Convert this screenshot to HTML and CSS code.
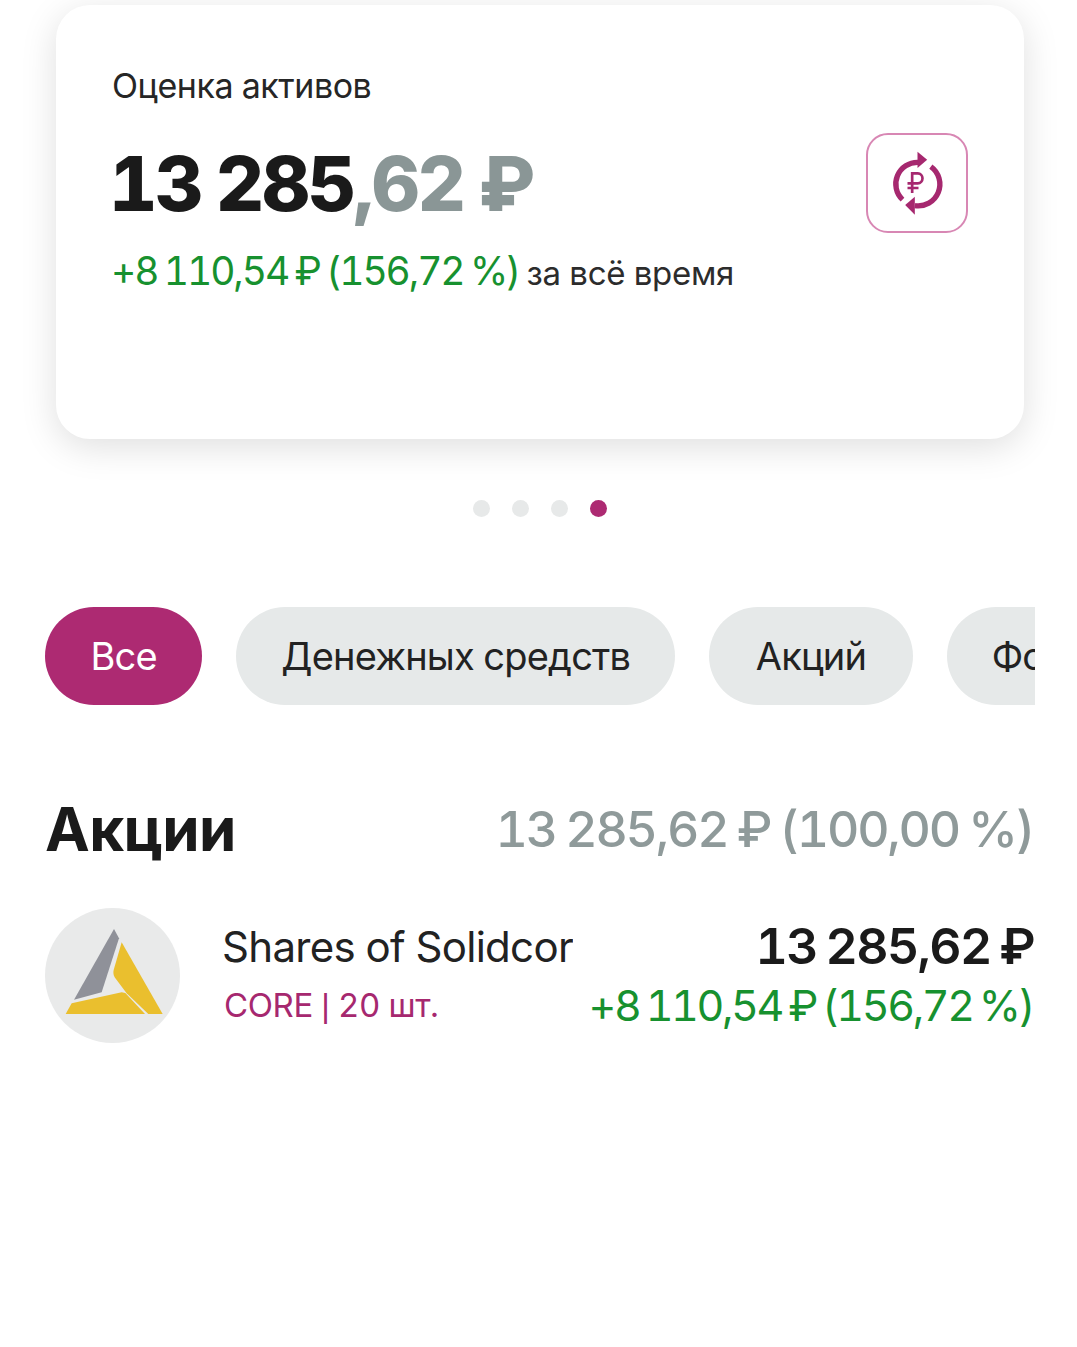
FILE: index.html
```html
<!DOCTYPE html>
<html lang="ru">
<head>
<meta charset="utf-8">
<title>Оценка активов</title>
<link rel="stylesheet" href="styles.css">
</head>
<body>
<main class="page">
  <section class="card">
    <div class="card-text">
      <p class="card-label">Оценка активов</p>
      <p class="total"><span>13 285</span><span class="total-muted">,62 ₽</span></p>
      <p class="change"><span class="change-value">+8 110,54 ₽ (156,72 %)</span> <span class="change-note">за всё время</span></p>
    </div>
    <button class="swap" type="button" aria-label="Обмен">
      <svg viewBox="120 87 170 210" width="57" height="70" fill="none">
        <path d="M160 242 A65 65 0 0 1 207 130" stroke="#a6286f" stroke-width="16"/>
        <path d="M205 98 L234 122 L205 147 Z" fill="#a6286f"/>
        <path d="M245 143 A65 65 0 0 1 197 260" stroke="#a6286f" stroke-width="16"/>
        <path d="M197 233 L168 258 L197 287 Z" fill="#a6286f"/>
        <path d="M189 222 V163 H206 A14 15 0 0 1 206 193 H175 M175 207 H208" stroke="#a6286f" stroke-width="8"/>
      </svg>
    </button>
  </section>

  <div class="dots">
    <i class="dot"></i><i class="dot"></i><i class="dot"></i><i class="dot dot-active"></i>
  </div>

  <nav class="chips">
    <a class="chip chip-active">Все</a>
    <a class="chip">Денежных средств</a>
    <a class="chip chip-short">Акций</a>
    <a class="chip">Фондов</a>
  </nav>

  <section class="group">
    <header class="group-head">
      <h2 class="group-title">Акции</h2>
      <span class="group-sum">13 285,62 ₽ (100,00 %)</span>
    </header>
    <div class="asset">
      <div class="logo">
        <svg viewBox="45 39 405 405" width="135" height="135">
          <path d="M252 102 L267 130 L215 292 L132 314 Z" fill="#8f9199"/>
          <path d="M275 142 L398 357 L355 357 L290 295 L255 248 Q248 238 251 225 Z" fill="#eabf2e"/>
          <path d="M107 357 L125 325 L275 292 L286 294 L345 357 Z" fill="#eabf2e"/>
        </svg>
      </div>
      <div class="asset-name">
        <div class="asset-title">Shares of Solidcore</div>
        <div class="asset-ticker">CORE <span class="ticker-sep">|</span> 20 шт.</div>
      </div>
      <div class="asset-values">
        <div class="asset-sum">13 285,62 ₽</div>
        <div class="asset-change">+8 110,54 ₽ (156,72 %)</div>
      </div>
    </div>
  </section>
</main>
</body>
</html>
```

FILE: styles.css
```css
* { box-sizing: border-box; }
html, body { margin: 0; background: #fff; }
body {
  width: 1077px;
  height: 1347px;
  overflow: hidden;
  font-family: Inter, "Noto Sans", sans-serif;
  font-variant-numeric: tabular-nums;
  color: #1c1c1c;
}
p, h2 { margin: 0; }
.page { padding: 5px 42px 0 45px; }

.card {
  margin: 0 11px;
  width: 968px;
  height: 434px;
  border-radius: 34px;
  background: #fff;
  box-shadow: 0 8px 36px rgba(0, 0, 0, .13);
  padding: 61px 56px 0;
  display: flex;
  justify-content: space-between;
  align-items: flex-start;
}
.card-label { font-size: 34px; line-height: 40px; letter-spacing: -.45px; color: #262626; }
.total {
  margin: 34px 0 0 -3px;
  font-size: 75px;
  line-height: 88px;
  font-weight: 800;
  letter-spacing: -2.4px;
  word-spacing: -3px;
  color: #1a1a1a;
}
.total-muted { color: #8a9696; }
.change { margin-top: 20px; line-height: 46px; }
.change-value { margin-left: -1px; font-size: 39px; letter-spacing: -2.1px; word-spacing: -2px; color: #17912f; }
.change-note { margin-left: 3px; font-size: 33px; letter-spacing: -.3px; color: #2c2c2c; }
.swap {
  margin-top: 67px;
  width: 102px;
  height: 100px;
  border: 2px solid #d887b4;
  border-radius: 22px;
  background: #fff;
  padding: 0;
  display: flex;
  align-items: center;
  justify-content: center;
}

.dots { display: flex; justify-content: center; gap: 22px; margin-top: 61px; padding-right: 1px; }
.dot { width: 17px; height: 17px; border-radius: 50%; background: #e7e9e9; }
.dot-active { background: #ad2a72; }

.chips {
  margin-top: 90px;
  width: 990px;
  display: flex;
  gap: 34px;
  overflow: hidden;
}
.chip {
  flex: none;
  height: 98px;
  padding: 0 45px;
  border-radius: 49px;
  background: #e6e9e9;
  font-size: 38px;
  line-height: 98px;
  letter-spacing: -.8px;
  color: #222;
}
.chip-active { padding: 0 45.5px; background: #ad2a72; color: #fff; }
.chip-short { padding: 0 46.5px; }

.group { margin-top: 89px; }
.group-head { display: flex; justify-content: space-between; align-items: center; height: 70px; }
.group-title { font-size: 60px; line-height: 70px; font-weight: 700; letter-spacing: -.6px; color: #1a1a1a; }
.group-sum { margin-right: 2px; font-size: 50px; line-height: 70px; font-weight: 500; letter-spacing: -2.2px; word-spacing: -2px; color: #8f9a9a; }

.asset { margin-top: 44px; display: flex; align-items: center; }
.logo { width: 135px; height: 135px; border-radius: 50%; background: #e9eaea; flex: none; }
.logo svg { display: block; }
.asset-name { flex: none; margin: 0 0 2px 42px; width: 351px; overflow: hidden; white-space: nowrap; }
.asset-title { font-size: 42px; line-height: 52px; letter-spacing: -.7px; color: #222; }
.asset-ticker { margin-top: 10px; padding-left: 2px; font-size: 33px; line-height: 44px; letter-spacing: -.4px; color: #a6286f; }
.ticker-sep { font-family: "Liberation Sans", sans-serif; }
.asset-values { margin: 0 1px 2px auto; text-align: right; white-space: nowrap; }
.asset-sum { font-size: 50px; line-height: 56px; font-weight: 600; letter-spacing: -1.7px; word-spacing: -3px; color: #1a1a1a; }
.asset-change { margin-top: 5px; margin-right: 1px; font-size: 43px; line-height: 52px; letter-spacing: -2.43px; word-spacing: -3px; color: #17912f; }
```
